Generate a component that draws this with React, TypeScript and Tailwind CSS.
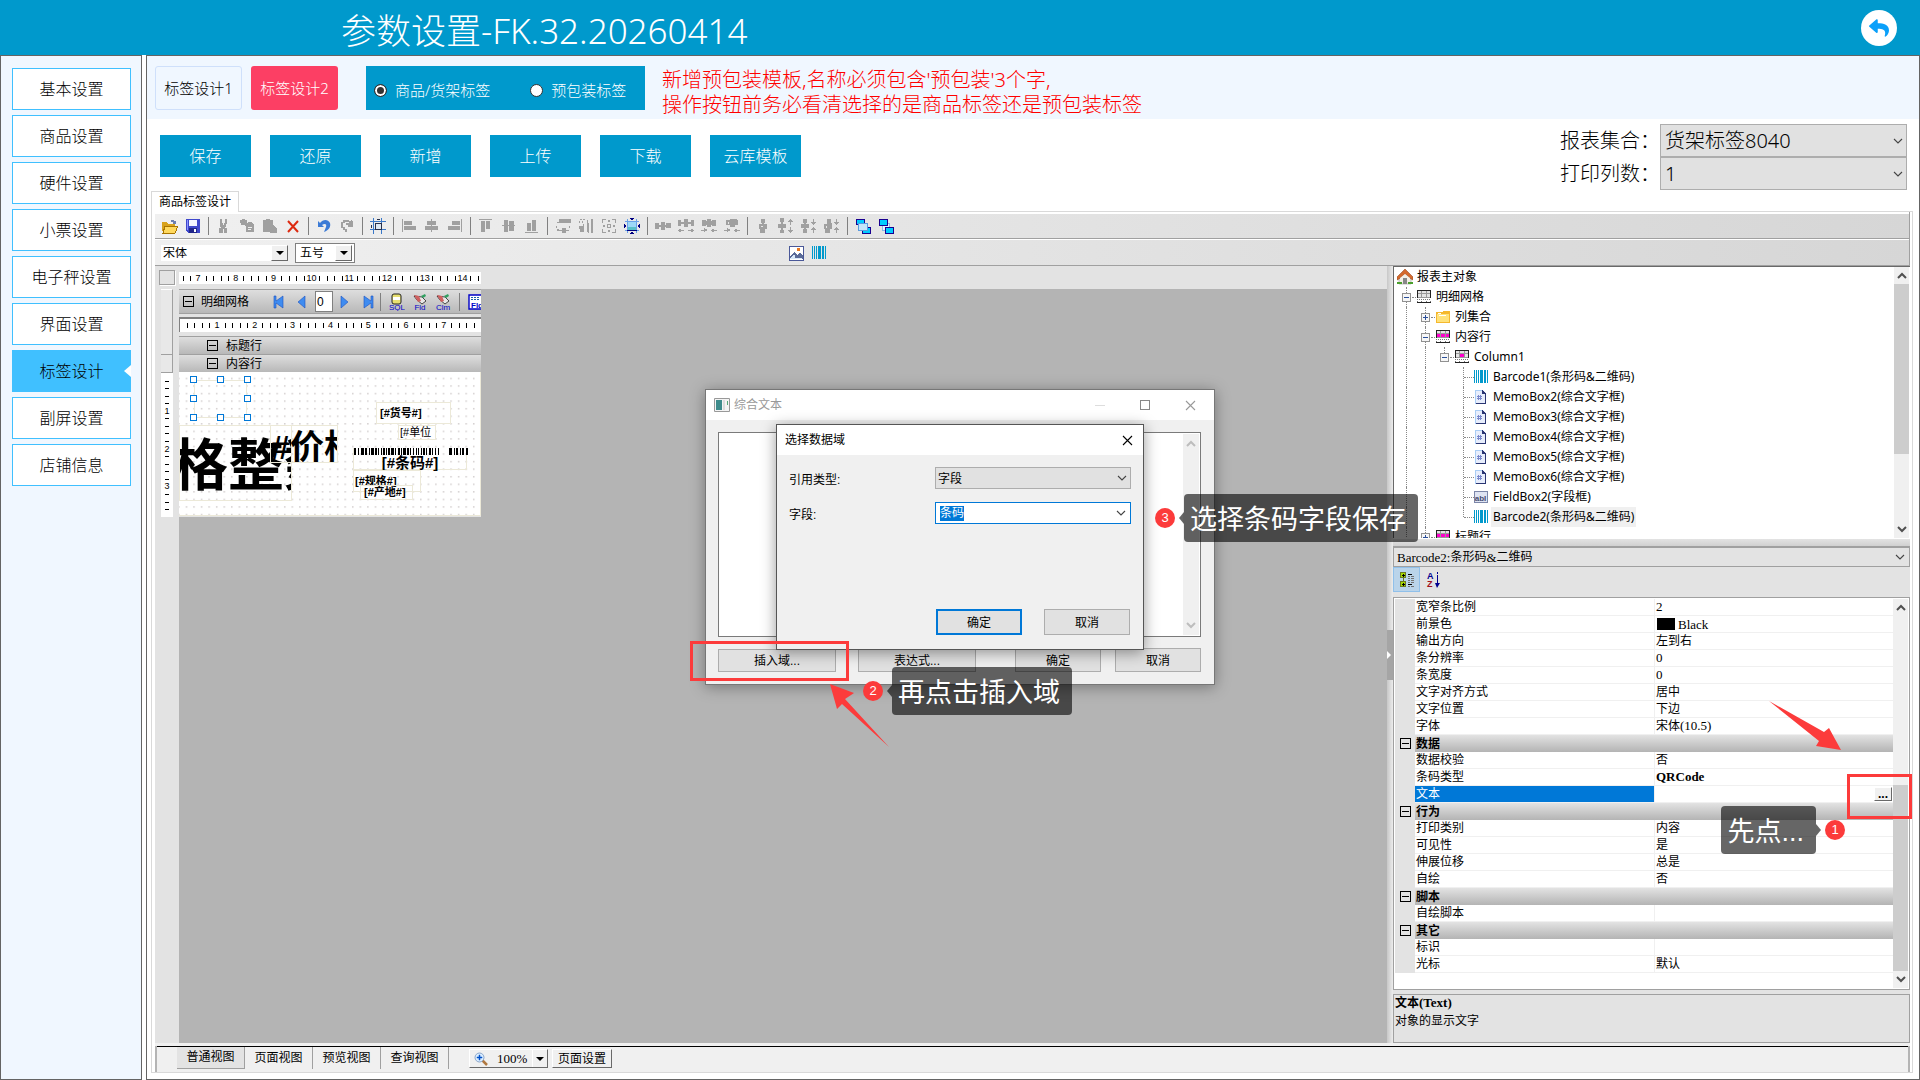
import { Fragment, useState } from 'react';
import type { ReactNode } from 'react';
import { FaReply } from 'react-icons/fa';

const MENU = ['基本设置', '商品设置', '硬件设置', '小票设置', '电子秤设置', '界面设置', '标签设计', '副屏设置', '店铺信息'];
const ACTIONS = ['保存', '还原', '新增', '上传', '下载', '云库模板'];

const GRAY = '#a0a0a0';

function Ico({ children, className = 'h-4 w-4' }: { children: ReactNode; className?: string }) {
  return (
    <svg viewBox="0 0 16 16" className={className} shapeRendering="crispEdges" aria-hidden="true">
      {children}
    </svg>
  );
}

const gray = (d: string) => (
  <Ico>
    <path d={d} fill={GRAY} />
  </Ico>
);

function BarcodeIcon() {
  return (
    <Ico className="h-4 w-4 shrink-0">
      <path d="M1 1h1v13H1zM3 1h1v13H3zM5 1h1v13H5zM7 1h3v13H7zM11 1h1v13h-1zM12 1h1v13h-1zM14 1h1v13h-1z" fill="#0099cc" />
    </Ico>
  );
}

type Tool = { label: string; icon: ReactNode } | null;

const TOOLS: Tool[] = [
  {
    label: '打开',
    icon: (
      <Ico>
        <path d="M0 4h5l1 2h7v8H1L0 13z" fill="#d8a21c" />
        <path d="M3 8h13l-3 7H1z" fill="#ffd95e" stroke="#a87400" strokeWidth="1" />
        <path d="M9 2h3v1h2v3h-3V4H9z" fill="#6d7fb0" />
      </Ico>
    ),
  },
  {
    label: '保存',
    icon: (
      <Ico>
        <path d="M1 1h14v14H3l-2-2z" fill="#3f48cc" />
        <path d="M4 2h8v6H4z" fill="#f4f6ff" />
        <path d="M4 10h8v5H4z" fill="#20258a" />
        <path d="M9 11h2v3H9z" fill="#fff" />
        <path d="M2 2h1v10H2z" fill="#8d94ff" />
      </Ico>
    ),
  },
  null,
  { label: '剪切', icon: gray('M4 1h2v4h1v2h1V5h1V1h2v5h-1v3h-1v1h2v5h-3v-4H7v4H3v-5h2V9H4z') },
  { label: '复制', icon: gray('M1 2h2V1h3v1h2v3h1V4h4l2 3v7H7V8H6V7H2V5H1zM9 9v1h4V9zM9 11v1h3v-1z') },
  { label: '粘贴', icon: gray('M1 2h3V1h4v1h3v5h1l3 4v4H8v-1H1z') },
  {
    label: '删除',
    icon: (
      <Ico>
        <path d="M3 3l10 11M13 3L3 14" stroke="#dd2a10" strokeWidth="2" fill="none" shapeRendering="auto" />
      </Ico>
    ),
  },
  null,
  {
    label: '撤销',
    icon: (
      <Ico>
        <path d="M2 3v6h6L6 7c3-2 5-1 4 2l-2 5c5-2 7-5 6-9-2-4-7-4-10 0z" fill="#3c7bd6" shapeRendering="auto" />
      </Ico>
    ),
  },
  { label: '重做', icon: gray('M14 3v6H9V7H7V5h3V4H6v1H4v4h2v2h2v3H6v-2H4v-2H2V4h2V2h6v1h2V2h1v1z') },
  null,
  {
    label: '网格',
    icon: (
      <Ico>
        <path d="M3 0h1v16H3zM11 0h1v16h-1zM0 3h16v1H0zM0 11h16v1H0z" fill="#3a78c8" />
        <path d="M5 5h6v6H5z" fill="#dce8f4" stroke="#26304c" />
        <path d="M7 1h3v1H7zM1 7h1v3H1z" fill="#26304c" />
      </Ico>
    ),
  },
  null,
  { label: '左对齐', icon: gray('M1 1h1v13H1zM3 3h8v4H3zM3 8h12v4H3z') },
  { label: '水平居中', icon: gray('M7 1h1v2h4v4H8v1h6v4H8v2H7v-2H1V8h6V7H3V3h4z') },
  { label: '右对齐', icon: gray('M14 1h1v13h-1zM5 3h8v4H5zM1 8h12v4H1z') },
  null,
  { label: '顶对齐', icon: gray('M1 1h13v1H1zM3 3h4v11H3zM8 3h4v8H8z') },
  { label: '垂直居中', icon: gray('M3 2h4v5h1V3h5v4h1v1h-1v5H8V8H7v6H3V8H1V7h2z') },
  { label: '底对齐', icon: gray('M1 14h13v1H1zM3 5h4v8H3zM8 2h4v11H8z') },
  null,
  { label: '等宽', icon: gray('M4 1h12v4H2V4h2zM1 8h1v2H1zM14 8h1v2h-1zM2 11h2v1h3v-2h4v2h3v1h-3v2H7v-2H2z') },
  { label: '等高', icon: gray('M2 1h2v1H2zM5 1h2v1H5zM1 3h1v2H1zM4 3h1v2H4zM1 8h4V6h1v8H2v-3H1zM9 1l2 5v9h-1L9 12zM13 1h2v14h-2z') },
  { label: '等大小', icon: gray('M1 1h4v1H2v3H1zM11 1h4v4h-1V2h-3zM1 11h1v3h3v1H1zM14 11h1v4h-4v-1h3zM6 6h4v4H6zM7 7v2h2V7zM7 2h2v2H7zM7 12h2v2H7zM2 7h2v2H2zM12 7h2v2h-2z') },
  {
    label: '适应网格',
    icon: (
      <Ico>
        <path d="M3 1h1v14H3zM12 1h1v14h-1zM1 3h14v1H1zM1 12h14v1H1z" fill="#6aa2e8" />
        <path d="M4 4h8v8H4z" fill="#9cd8f8" />
        <path d="M4 9h8v3H4z" fill="#58c0c8" />
        <path d="M3 12h10v1H3zM6 0h4v1H6zM7 1h2v1H7zM6 15h4v1H6zM7 14h2v1H7zM0 6h1v4H0zM1 7h1v2H1zM15 6h1v4h-1zM14 7h1v2h-1z" fill="#000080" />
      </Ico>
    ),
  },
  null,
  { label: '横向等距', icon: gray('M0 5h4v2h2V4h4v3h1V5h5v5h-5V9h-1v3H6V9H4v2H0z') },
  { label: '增加横向间距', icon: gray('M0 2h3v2h3V1h4v3h3V2h3v6h-3V6h-3v3H6V6H3v2H0zM0 12h1v-1h2v1h3v1H3v1H1v-1H0zM10 12h3v-1h2v1h1v1h-1v1h-2v-1h-3z') },
  { label: '减小横向间距', icon: gray('M1 2h4v1h1V1h4v2h1V2h4v6h-4V7h-1v2H6V7H5v1H1zM0 12h3v-2h1v1h2v2H4v1H3v-1H0zM10 12h1v-1h2v1h3v1h-3v1h-2v-1h-1z') },
  { label: '移除横向间距', icon: gray('M2 2h4V1h7v1h1v5h-3v2H6V7H2zM4 4v2h1V4zM0 12h3v-2h1v1h2v2H4v1H3v-1H0zM10 12h1v-1h2v1h3v1h-3v1h-2v-1h-1z') },
  null,
  { label: '纵向等距', icon: gray('M6 1h4v4H9v1h3v5h-2v4H5v-4H4V6h3V5H6zM6 8v1h2V8z') },
  { label: '增加纵向间距', icon: gray('M2 0h4v4H5v2h3v4H5v2h1v3H2v-3h1v-2H0V6h3V4H2zM12 1h1v1h1v1h1v1h-2v3h-1V4h-2V3h1V2h1zM12 9h1v3h2v1h-1v1h-1v1h-1v-1h-1v-1h-1v-1h2z') },
  { label: '减小纵向间距', icon: gray('M2 1h4v4H5v1h3v4H5v1h1v4H2v-4h1v-1H0V6h3V5H2zM12 1h1v3h2v1h-1v1h-1v1h-1V6h-1V5h-1V4h2zM12 9h1v1h1v1h1v1h-2v3h-1v-3h-2v-1h1v-1h1z') },
  { label: '移除纵向间距', icon: gray('M3 1h4v4h1v6H6v4H1v-4H0V6h3zM2 8v2h1V8zM12 1h1v3h2v1h-1v1h-1v1h-1V6h-1V5h-1V4h2zM12 9h1v1h1v1h1v1h-2v3h-1v-3h-2v-1h1v-1h1z') },
  null,
  {
    label: '置前',
    icon: (
      <Ico>
        <path d="M1 1h8v5H1zM7 9h8v6H7z" fill="#00ccff" stroke="#1a0090" />
        <path d="M3 5h9v7H3z" fill="#c4e6fb" stroke="#5a9be0" />
      </Ico>
    ),
  },
  {
    label: '置后',
    icon: (
      <Ico>
        <path d="M4 5h7v7H4z" fill="#e8f4ff" stroke="#88b8e8" />
        <path d="M1 1h8v6H1zM7 9h8v6H7z" fill="#00ccff" stroke="#1a0090" />
      </Ico>
    ),
  },
];

function Chevron({ className = '' }: { className?: string }) {
  return (
    <svg viewBox="0 0 10 6" className={'pointer-events-none h-[6px] w-[10px] ' + className} aria-hidden="true">
      <path d="M1 1l4 4 4-4" fill="none" stroke="currentColor" strokeWidth="1.1" />
    </svg>
  );
}

function ScrollArrow({ up = false, light = false }: { up?: boolean; light?: boolean }) {
  return (
    <svg viewBox="0 0 10 7" className={'mx-auto h-[7px] w-[10px] shrink-0 ' + (light ? 'text-[#bdbdbd]' : 'text-[#505050]')} aria-hidden="true">
      <path d={up ? 'M1 6l4-4 4 4' : 'M1 1l4 4 4-4'} fill="none" stroke="currentColor" strokeWidth="2" />
    </svg>
  );
}

function ClassicDrop() {
  return (
    <span className="pointer-events-none flex h-4 w-[17px] shrink-0 items-center justify-center border border-[#fff] border-r-[#696969] border-b-[#696969] bg-[#f0f0f0]">
      <span className="border-x-[4px] border-t-[4px] border-x-transparent border-t-black" />
    </span>
  );
}

function Minus() {
  return (
    <span className="flex h-[11px] w-[11px] shrink-0 items-center justify-center border border-black">
      <span className="h-px w-[7px] bg-black" />
    </span>
  );
}

/* ---------- rulers ---------- */

const CM = 37.8;

function Ruler({ first, offset, labels, width }: { first: number; offset: number; labels: number; width: number }) {
  const ticks: number[] = [];
  for (let i = -5; i < labels * 5 + 5; i++) {
    const x = Math.round(offset + (i * CM) / 5);
    if (i % 5 !== 0 && x > 3 && x < width - 2) ticks.push(x);
  }
  return (
    <svg viewBox={`0 0 ${width} 12`} className="h-3 w-full bg-white" preserveAspectRatio="xMinYMid slice">
      {ticks.map((x) => (
        <rect key={x} x={x} y={4} width={1} height={5} fill="#000" />
      ))}
      {Array.from({ length: labels }, (_, i) => (
        <text key={i} x={offset + i * CM} y={9} textAnchor="middle" fontSize="9" fontFamily="Liberation Sans">
          {first + i}
        </text>
      ))}
    </svg>
  );
}

function VRuler() {
  return (
    <svg viewBox="0 0 12 144" className="block h-36 w-3 bg-white">
      {Array.from({ length: 18 }, (_, i) => i + 1)
        .filter((i) => i % 5 !== 0)
        .map((i) => (
          <rect key={i} x={4} y={Math.round(i * 7.56)} width={4} height={1} fill="#000" />
        ))}
      {[1, 2, 3].map((n) => (
        <text key={n} x={6} y={n * CM + 3} textAnchor="middle" fontSize="9" fontFamily="Liberation Sans">
          {n}
        </text>
      ))}
    </svg>
  );
}

/* ---------- label canvas ---------- */

// alternating bar / gap widths
const BARS = [2, 2, 1, 2, 3, 1, 2, 2, 1, 1, 3, 1, 2, 1, 1, 2, 1, 1, 2, 1, 1, 1, 2, 1, 3, 1, 1, 2, 2, 1, 1, 1, 3, 1, 2, 1, 1, 2, 1, 2, 1, 1, 1, 2, 1, 1, 2, 1, 1, 2, 2, 1, 1, 2, 1, 2, 1];

function CanvasBarcode() {
  let x = 0;
  return (
    <svg viewBox="0 0 114 7" className="block h-[7px] w-[114px]" shapeRendering="crispEdges">
      {BARS.map((w, i) => {
        const at = x;
        x += w;
        return i % 2 === 0 ? <rect key={i} x={at} y={0} width={w} height={7} fill="#000" /> : null;
      })}
      <path d="M95 0h3v7h-3zM100 0h1v7h-1zM102 0h2v7h-2zM106 0h1v7h-1zM108 0h2v7h-2zM112 0h2v7h-2z" fill="#000" />
    </svg>
  );
}

const HANDLES = [
  'left-[11px] top-[4px]',
  'left-[38px] top-[4px]',
  'left-[65px] top-[4px]',
  'left-[11px] top-[23px]',
  'left-[65px] top-[23px]',
  'left-[11px] top-[42px]',
  'left-[38px] top-[42px]',
  'left-[65px] top-[42px]',
];

function LabelCanvas() {
  return (
    <div className="relative h-36 w-[302px] overflow-hidden border-r border-b border-[#ece9d8] bg-white leading-none text-black">
      <svg className="absolute inset-0 h-full w-full" aria-hidden="true">
        <defs>
          <pattern id="dots" width="7.56" height="7.56" patternUnits="userSpaceOnUse" x="1" y="0">
            <rect x="6" y="6" width="1" height="1" fill="#9a8f8f" />
          </pattern>
        </defs>
        <rect width="100%" height="100%" fill="url(#dots)" />
      </svg>
      <div className="absolute top-2 left-[15px] h-[38px] w-[53px] border border-[#ece9d8]" />
      {HANDLES.map((pos) => (
        <span key={pos} className={'absolute h-[7px] w-[7px] border border-[#0078d7] bg-white ' + pos} />
      ))}
      <div className="absolute top-[53px] left-0 h-[76px] w-[113px] overflow-hidden border border-[#ece9d8] pt-[12px] text-[56px] font-bold whitespace-nowrap">
        <span className="-ml-2">格整数</span>
      </div>
      <div className="absolute top-[53px] left-[91px] h-[38px] w-[68px] overflow-hidden border border-[#ece9d8] pt-1 text-[34px] font-bold whitespace-nowrap">
        #价格
      </div>
      <div className="absolute top-[30px] left-[197px] h-[22px] w-[75px] border border-[#ece9d8] px-[3px] pt-[5px] text-[11px] font-bold">[#货号#]</div>
      <div className="absolute top-[53px] left-[219px] h-[15px] w-[38px] overflow-hidden border border-[#ece9d8] px-px pt-px text-[11px] whitespace-nowrap">
        [#单位
      </div>
      <div className="absolute top-[76px] left-[174px] h-[22px] w-[114px] border-x border-b border-[#ece9d8] text-center text-[15px] font-bold">
        <CanvasBarcode />
        [#条码#]
      </div>
      <div className="absolute top-[98px] left-[174px] h-[22px] w-[68px] border border-[#ece9d8] px-px pt-[5px] text-[11px] font-bold">[#规格#]</div>
      <div className="absolute top-[113px] left-[181px] h-[15px] w-[53px] border border-[#ece9d8] px-[3px] pt-px text-[11px] font-bold">[#产地#]</div>
    </div>
  );
}

function NavIcon({ d }: { d: string }) {
  return (
    <svg viewBox="0 0 12 14" className="h-[14px] w-3">
      <path d={d} fill="#3f8cf0" stroke="#1c50c0" strokeWidth="0.6" />
    </svg>
  );
}

function DbIcon({ word }: { word: string }) {
  return (
    <svg viewBox="0 0 16 18" className="h-[18px] w-4">
      {word === 'SQL' ? (
        <>
          <rect x="3" y="1" width="9" height="10" rx="2" fill="#e8e070" stroke="#222" />
          <rect x="4" y="4" width="7" height="3" fill="#fff" />
        </>
      ) : (
        <>
          <path d="M2 3l8 1 4 4-4 3-5-4z" fill="#e8e8e8" stroke="#222" strokeWidth="0.8" />
          <path d="M2 2l5 1 2 5-3 1z" fill="#d06060" />
          <path d="M9 3l4-2 1 2-3 2z" fill="#30a060" />
        </>
      )}
      <text x="8" y="17" textAnchor="middle" fontSize="8" fill="#0000c8" fontFamily="Liberation Sans">
        {word}
      </text>
    </svg>
  );
}

function Designer() {
  return (
    <div className="flex w-[326px] shrink-0 flex-col">
      <div className="flex h-[23px] items-center">
        <div className="mx-1 h-[15px] w-4 border border-[#a0a0a0] bg-[#e3e3e3] shadow-[1px_1px_0_#fff]" />
        <div className="flex-1">
          <Ruler first={7} offset={19} labels={8} width={302} />
        </div>
      </div>
      <div className="flex">
        <div className="w-6 px-[6px]">
          <div className="h-[66px] border-t border-r border-b border-[#a0a0a0] border-t-white bg-[#e8e8e8]" />
          <div className="h-[18px] border-r border-b border-[#a0a0a0] bg-[#e8e8e8]" />
          <VRuler />
        </div>
        <div className="w-[302px] bg-[#e3e3e3]">
          <div className="flex h-[25px] items-center overflow-hidden border-t border-b border-[#a0a0a0] bg-gradient-to-b from-[#dedede] to-[#b8b8b8] pl-1">
            <Minus />
            <span className="ml-[7px] w-[72px] shrink-0">明细网格</span>
            <button type="button" aria-label="首页" className="w-6 shrink-0">
              <NavIcon d="M1 1h2v5l7-5v12l-7-5v5H1z" />
            </button>
            <button type="button" aria-label="上一页" className="w-[18px] shrink-0">
              <NavIcon d="M8 1v12L1 7z" />
            </button>
            <input aria-label="页码" defaultValue="0" className="h-[21px] w-[18px] shrink-0 border border-[#808080] bg-white pl-px text-xs leading-none outline-none" />
            <button type="button" aria-label="下一页" className="ml-[7px] w-[23px] shrink-0">
              <NavIcon d="M1 1l7 6-7 6z" />
            </button>
            <button type="button" aria-label="末页" className="w-[17px] shrink-0">
              <NavIcon d="M1 1l7 5V1h2v12H8V8l-7 5z" />
            </button>
            <span className="h-[18px] w-px shrink-0 bg-[#808080]" />
            <span className="ml-2 flex shrink-0 gap-[7px]">
              <DbIcon word="SQL" />
              <DbIcon word="Fld" />
              <DbIcon word="Clm" />
            </span>
            <span className="ml-2 h-[18px] w-px shrink-0 bg-[#808080]" />
            <svg viewBox="0 0 14 16" className="ml-2 h-4 w-[14px] shrink-0">
              <path d="M1 1h14v14H1z" fill="#fff" stroke="#0000c8" strokeWidth="1.4" />
              <path d="M3 3h2v1H3zM6 3h2v1H6zM9 3h2v1H9zM3 5h2v1H3zM6 5h2v1H6zM9 5h2v1H9z" fill="#1c60a8" />
              <text x="3" y="14" fontSize="8" fontWeight="bold" fill="#0000c8" fontFamily="Liberation Sans">
                Fld
              </text>
            </svg>
          </div>
          <div className="my-[3px] border-t-2 border-l border-[#808080] bg-white pb-px">
            <Ruler first={1} offset={37} labels={7} width={301} />
          </div>
          <div className="mt-1 flex h-[18px] items-center gap-2 border-t border-[#a0a0a0] bg-gradient-to-b from-[#dedede] to-[#b8b8b8] pl-7">
            <Minus />
            标题行
          </div>
          <div className="flex h-[18px] items-center gap-2 border-t border-[#a0a0a0] bg-gradient-to-b from-[#dedede] to-[#b8b8b8] pl-7">
            <Minus />
            内容行
          </div>
          <LabelCanvas />
        </div>
      </div>
    </div>
  );
}

/* ---------- callouts ---------- */

function Badge({ n }: { n: number }) {
  return <span className="flex h-5 w-5 shrink-0 items-center justify-center rounded-full bg-[#fc3b3b] text-[13px] text-white">{n}</span>;
}

function Bubble({ children, side = 'left' }: { children: ReactNode; side?: 'left' | 'right' }) {
  return (
    <span className="relative flex h-12 items-center rounded bg-black/60 pt-1 pr-3 pl-[6px] text-[27px] whitespace-nowrap text-white">
      {children}
      <span
        className={
          'absolute top-1/2 -translate-y-1/2 border-y-[6px] border-y-transparent ' +
          (side === 'left' ? 'right-full border-r-[5px] border-r-black/60' : 'left-full border-l-[5px] border-l-black/60')
        }
      />
    </span>
  );
}

/* ---------- dialogs ---------- */

const DLG_BTN = 'border border-[#adadad] bg-[#e1e1e1] pt-px text-[12px] leading-none';

function Cross() {
  return (
    <svg viewBox="0 0 11 11" className="h-[11px] w-[11px]">
      <path d="M1 1l9 9M10 1l-9 9" stroke="currentColor" strokeWidth="1.1" />
    </svg>
  );
}

function FieldDialog() {
  return (
    <section className="absolute top-[34px] left-[70px] flex h-[226px] w-[368px] flex-col border border-[#555] bg-[#f0f0f0] shadow-[0_3px_14px_rgba(0,0,0,0.4)]">
      <header className="flex h-[30px] items-center justify-between bg-white pr-[10px] pl-2">
        <h2>选择数据域</h2>
        <button type="button" aria-label="关闭">
          <Cross />
        </button>
      </header>
      <div className="flex flex-1 flex-col px-3 pt-3">
        <div className="flex h-[22px] items-center justify-between">
          <label htmlFor="refType" className="pt-1">
            引用类型:
          </label>
          <span className="relative">
            <select id="refType" className="block h-[22px] w-[196px] appearance-none border border-[#adadad] bg-[#e1e1e1] px-[2px] pt-px text-[12px] outline-none">
              <option>字段</option>
            </select>
            <Chevron className="absolute top-2 right-1 text-[#444]" />
          </span>
        </div>
        <div className="mt-[13px] flex h-[22px] items-center justify-between">
          <span className="pt-1" id="fieldLabel">
            字段:
          </span>
          <button
            type="button"
            aria-labelledby="fieldLabel"
            className="flex h-[22px] w-[196px] items-center justify-between border border-[#0078d7] bg-white pr-1 pl-1 text-left"
          >
            <span className="bg-[#0078d7] leading-[15px] text-white">条码</span>
            <Chevron className="text-[#444]" />
          </button>
        </div>
        <div className="mt-auto mr-px mb-[14px] flex justify-end gap-[22px]">
          <button type="button" className="h-[26px] w-[86px] border-2 border-[#0078d7] bg-[#e1e1e1] pt-px">
            确定
          </button>
          <button type="button" className={DLG_BTN + ' h-[26px] w-[86px]'}>
            取消
          </button>
        </div>
      </div>
    </section>
  );
}

function MemoDialog() {
  return (
    <section className="absolute top-[123px] left-[550px] z-20 h-[296px] w-[510px] border border-[#777] bg-[#f0f0f0] shadow-[0_2px_14px_rgba(0,0,0,0.35)]">
      <header className="flex h-[30px] items-center bg-white pl-2 text-[#999]">
        <svg viewBox="0 0 16 14" className="mr-1 h-[14px] w-4">
          <path d="M0.500 0.500h15v13H0.500z" fill="#f4f4f4" stroke="#999" />
          <path d="M2 2h6v10H2z" fill="#3d8b8b" />
          <path d="M9 2h2v10H9z" fill="#ddd" />
          <path d="M13 3h1v4h-1z" fill="#58a878" />
        </svg>
        <h2>综合文本</h2>
        <div className="ml-auto flex items-center gap-[35px] pr-[18px]">
          <span className="h-px w-[10px] bg-[#ddd]" />
          <span className="h-[10px] w-[10px] border border-[#888]" />
          <button type="button" aria-label="关闭窗口">
            <Cross />
          </button>
        </div>
      </header>
      <div className="pt-3 pr-[13px] pl-3">
        <div className="flex h-[205px] border border-[#7a7a7a] bg-white p-px">
          <textarea aria-label="综合文本" className="flex-1 resize-none outline-none" />
          <div className="flex w-4 flex-col justify-between bg-[#f0f0f0] py-[6px]">
            <ScrollArrow up light />
            <ScrollArrow light />
          </div>
        </div>
        <div className="mt-[11px] flex items-center">
          <button type="button" className={DLG_BTN + ' h-[23px] w-[118px]'}>
            插入域...
          </button>
          <button type="button" className={DLG_BTN + ' ml-[22px] h-[23px] w-[118px]'}>
            表达式...
          </button>
          <button type="button" className={DLG_BTN + ' ml-auto h-6 w-[86px]'}>
            确定
          </button>
          <button type="button" className={DLG_BTN + ' ml-[14px] h-6 w-[86px]'}>
            取消
          </button>
        </div>
      </div>
      <FieldDialog />
      <div className="absolute top-[251px] -left-4 h-10 w-[159px] border-[3px] border-[#fc3b3b]" />
      <svg viewBox="0 0 60 64" className="absolute top-[294px] left-[124px] h-16 w-[60px]" aria-hidden="true">
        <path d="M0 0L24 9L15 15L59 63L12 20L7 25Z" fill="#fc3b3b" />
      </svg>
      <div className="absolute top-[277px] left-[157px] flex items-center gap-[9px]">
        <Badge n={2} />
        <Bubble>再点击插入域</Bubble>
      </div>
      <div className="absolute top-[104px] left-[449px] flex items-center gap-[9px]">
        <Badge n={3} />
        <Bubble>选择条码字段保存</Bubble>
      </div>
    </section>
  );
}

/* ---------- object tree ---------- */

function GridIcon({ fill = '' }: { fill?: string }) {
  return (
    <Ico className="h-4 w-4 shrink-0">
      <path d="M1 1h14v8H1z" fill="#e4e4e4" />
      <path d="M1 4h14v1H1zM1 8h14v1H1zM5 2h1v6H5zM10 2h1v6h-1z" fill="#999" />
      {fill === 'row' && <path d="M1 5h4v3H1zM6 5h4v3H6zM11 5h4v3h-4z" fill="#ff00cc" />}
      {fill === 'cell' && <path d="M6 5h4v3H6z" fill="#ff00cc" />}
      <path d="M1 1h14v1H1zM1 1h1v8H1zM14 1h1v8h-1zM1 13h14v1H1z" fill="#222" />
      <path d="M1 10h1v1H1zM3 10h1v1H3zM5 10h1v1H5zM7 10h1v1H7zM9 10h1v1H9zM11 10h1v1h-1zM13 10h1v1h-1zM1 12h1v1H1zM5 12h1v1H5zM10 12h1v1h-1zM14 12h1v1h-1z" fill="#777" />
    </Ico>
  );
}

const folderIcon = (
  <Ico className="h-4 w-4 shrink-0">
    <path d="M1 3h6l1-1h7v12H1z" fill="#f5b82e" />
    <path d="M2 5h12v8H2z" fill="#ffe27a" />
    <path d="M4 6h7v1H4zM3 4h3v1H3z" fill="#fff" />
  </Ico>
);

const memoIcon = (
  <Ico className="h-4 w-4 shrink-0">
    <path d="M2 1h8l3 3v11H2z" fill="#e8eefc" />
    <path d="M2 1h1v14H2zM2 1h7v1H2z" fill="#a9cdf5" />
    <path d="M12 4h1v11H3v-1h9zM9 1h1v4H9zM10 2h1v1h1v1h1v1h-3z" fill="#2a3572" />
    <path d="M5 6h1v5H5zM7 6h1v5H7zM4 7h5v1H4zM4 9h5v1H4z" fill="#7a88cc" />
  </Ico>
);

const fieldIcon = (
  <svg viewBox="0 0 16 16" className="h-4 w-4 shrink-0">
    <rect x="1.500" y="2.500" width="13" height="11" fill="#dfe4f2" stroke="#7c86a8" />
    <text x="7.500" y="11.500" textAnchor="middle" fontSize="8" fontWeight="bold" fill="#444c70" fontFamily="Liberation Sans">
      abI
    </text>
  </svg>
);

const houseIcon = (
  <svg viewBox="0 0 16 16" className="h-4 w-4 shrink-0">
    <path d="M2 7h12v8H2z" fill="#f3efe6" stroke="#999" strokeWidth="0.6" />
    <path d="M8 0L0 8v3l2-1 6-5 6 5 2 1V8z" fill="#d4692c" stroke="#8a3c14" strokeWidth="0.5" />
    <path d="M8 5l5 4v1H3V9z" fill="#f3efe6" />
    <path d="M6 9h4v6H6z" fill="#888" />
    <path d="M0 13h5v2H0zM11 13h5v2h-5z" fill="#4aa02c" />
  </svg>
);

type TreeRow = { depth: number; text: string; icon: ReactNode; open?: boolean; leaf?: boolean; active?: boolean };

const TREE: TreeRow[] = [
  { depth: 0, text: '明细网格', icon: <GridIcon />, open: true },
  { depth: 1, text: '列集合', icon: folderIcon, open: false },
  { depth: 1, text: '内容行', icon: <GridIcon fill="row" />, open: true },
  { depth: 2, text: 'Column1', icon: <GridIcon fill="cell" />, open: true },
  { depth: 3, text: 'Barcode1(条形码&二维码)', icon: <BarcodeIcon />, leaf: true },
  { depth: 3, text: 'MemoBox2(综合文字框)', icon: memoIcon, leaf: true },
  { depth: 3, text: 'MemoBox3(综合文字框)', icon: memoIcon, leaf: true },
  { depth: 3, text: 'MemoBox4(综合文字框)', icon: memoIcon, leaf: true },
  { depth: 3, text: 'MemoBox5(综合文字框)', icon: memoIcon, leaf: true },
  { depth: 3, text: 'MemoBox6(综合文字框)', icon: memoIcon, leaf: true },
  { depth: 3, text: 'FieldBox2(字段框)', icon: fieldIcon, leaf: true },
  { depth: 3, text: 'Barcode2(条形码&二维码)', icon: <BarcodeIcon />, leaf: true, active: true },
  { depth: 1, text: '标题行', icon: <GridIcon fill="row" />, open: false },
];

function ObjectTree() {
  return (
    <div className="flex h-[272px] shrink-0 overflow-hidden border-t border-l border-[#696969] bg-white">
      <ul className="flex-1 pl-[3px] font-['Noto_Sans','Noto_Sans_CJK_SC',sans-serif]">
        <li className="flex h-5 items-center gap-1">
          {houseIcon}
          报表主对象
        </li>
        {TREE.map((row) => (
          <li key={row.text} className="flex h-5 items-center">
            {Array.from({ length: row.depth }, (_, i) => (
              <span key={i} className="flex h-5 w-[19px] shrink-0 justify-center">
                {i < 2 && <span className="border-l border-dotted border-[#888]" />}
              </span>
            ))}
            {row.leaf ? (
              <span className="relative h-5 w-[19px] shrink-0">
                <span className={'absolute top-0 left-[9px] border-l border-dotted border-[#888] ' + (row.active ? 'h-[10px]' : 'h-5')} />
                <span className="absolute top-[10px] left-[10px] w-[10px] border-t border-dotted border-[#888]" />
              </span>
            ) : (
              <span className="relative flex h-5 w-[19px] shrink-0 items-center justify-center">
                <span className={'absolute top-0 left-[9px] border-l border-dotted border-[#888] ' + (row.depth === 2 ? 'h-[10px]' : 'h-5')} />
                <span className="absolute top-[10px] right-0 w-1 border-t border-dotted border-[#888]" />
                <span className="relative flex h-[9px] w-[9px] items-center justify-center border border-[#919191] bg-[#f6f6f6]">
                  <span className="h-px w-[5px] bg-[#2a4f9a]" />
                  {!row.open && <span className="absolute h-[5px] w-px bg-[#2a4f9a]" />}
                </span>
              </span>
            )}
            {row.icon}
            <span className={'ml-[2px] px-[2px] leading-5 ' + (row.active ? 'bg-[#f0f0f0]' : '')}>{row.text}</span>
          </li>
        ))}
      </ul>
      <div className="mr-px flex w-[15px] flex-col bg-[#f0f0f0] py-[5px]">
        <ScrollArrow up />
        <div className="mt-[5px] h-[170px] bg-[#cdcdcd]" />
        <div className="mt-auto">
          <ScrollArrow />
        </div>
      </div>
    </div>
  );
}

/* ---------- property grid ---------- */

type Prop = { name: string; value?: ReactNode; group?: boolean; active?: boolean };

// Latin runs of the grid use a serif face next to the CJK text
function Latin({ children }: { children: ReactNode }) {
  return <span className="font-['Liberation_Serif',serif] text-[13px] leading-none">{children}</span>;
}

const PROPS: Prop[] = [
  { name: '宽窄条比例', value: <Latin>2</Latin> },
  {
    name: '前景色',
    value: (
      <span className="flex h-4 items-center gap-[3px] pl-px">
        <span className="h-3 w-[18px] bg-black" />
        <Latin>Black</Latin>
      </span>
    ),
  },
  { name: '输出方向', value: '左到右' },
  { name: '条分辨率', value: <Latin>0</Latin> },
  { name: '条宽度', value: <Latin>0</Latin> },
  { name: '文字对齐方式', value: '居中' },
  { name: '文字位置', value: '下边' },
  {
    name: '字体',
    value: (
      <>
        宋体<Latin>(10.5)</Latin>
      </>
    ),
  },
  { name: '数据', group: true },
  { name: '数据校验', value: '否' },
  {
    name: '条码类型',
    value: (
      <b>
        <Latin>QRCode</Latin>
      </b>
    ),
  },
  { name: '文本', active: true },
  { name: '行为', group: true },
  { name: '打印类别', value: '内容' },
  { name: '可见性', value: '是' },
  { name: '伸展位移', value: '总是' },
  { name: '自绘', value: '否' },
  { name: '脚本', group: true },
  { name: '自绘脚本' },
  { name: '其它', group: true },
  { name: '标识' },
  { name: '光标', value: '默认' },
];

function PropertyGrid() {
  return (
    <div className="relative flex min-h-0 flex-1 border border-[#a0a0a0] bg-white p-px">
      <div className="flex-1">
        <table className="w-full table-fixed border-separate border-spacing-0">
          <colgroup>
            <col className="w-5" />
            <col />
            <col />
          </colgroup>
          <tbody>
            {PROPS.map((p) =>
              p.group ? (
                <tr key={p.name} className="h-[17px]">
                  <td className="bg-[#e3e3e3] p-0">
                    <span className="flex h-4 items-center justify-center">
                      <Minus />
                    </span>
                  </td>
                  <td colSpan={2} className="bg-gradient-to-b from-[#e3e3e3] to-[#b4b4b4] p-0 px-px leading-4 font-bold">
                    {p.name}
                  </td>
                </tr>
              ) : (
                <tr key={p.name} className="h-[17px]">
                  <td className="bg-[#e3e3e3] p-0" />
                  <td className={'border-b border-[#f0f0f0] p-0 px-px leading-4 ' + (p.active ? 'bg-[#0078d7] text-white' : '')}>{p.name}</td>
                  <td className="border-b border-l border-[#f0f0f0] p-0 px-px leading-4">
                    {p.active ? (
                      <span className="flex h-4 items-center justify-end">
                        <button
                          type="button"
                          aria-label="编辑文本"
                          className="h-[14px] w-[18px] border border-white border-r-[#696969] border-b-[#696969] bg-[#f0f0f0] text-[12px] leading-[8px] font-bold"
                        >
                          ...
                        </button>
                      </span>
                    ) : (
                      p.value
                    )}
                  </td>
                </tr>
              ),
            )}
          </tbody>
        </table>
      </div>
      <div className="flex w-[15px] flex-col bg-[#f0f0f0] py-[5px]">
        <ScrollArrow up />
        <div className="mt-auto mb-[5px] h-[186px] bg-[#cdcdcd]" />
        <ScrollArrow />
      </div>

      <div className="absolute top-[176px] -right-[3px] z-30 h-[45px] w-[65px] border-[3px] border-[#fc3b3b]" />
      <svg viewBox="0 0 72 50" className="absolute top-[103px] right-[68px] z-30 h-[50px] w-[72px]" aria-hidden="true">
        <path d="M0 0L55 31L60 27L72 49L47 45L50 40Z" fill="#fc3b3b" />
      </svg>
      <div className="absolute top-[208px] right-[64px] z-30 flex items-center gap-[9px]">
        <Bubble side="right">先点...</Bubble>
        <Badge n={1} />
      </div>
    </div>
  );
}

function Inspector() {
  return (
    <aside className="flex w-[517px] shrink-0 flex-col bg-[#e3e3e3]">
      <ObjectTree />
      <div className="h-[9px] shrink-0 border-y border-[#a0a0a0] border-t-white bg-gradient-to-b from-[#e3e3e3] to-[#d0d0d0]" />
      <div className="relative flex h-5 shrink-0 items-center border border-[#a0a0a0] bg-[#e3e3e3] pl-[3px]">
        <select aria-label="当前对象" className="absolute inset-0 h-full w-full cursor-pointer appearance-none opacity-0">
          <option>Barcode2:条形码&二维码</option>
        </select>
        <Latin>Barcode2:</Latin>条形码<Latin>&amp;</Latin>二维码
        <Chevron className="absolute right-1 text-[#444]" />
      </div>
      <div className="flex h-[30px] shrink-0 items-start">
        <button type="button" aria-label="按分类" className="flex h-[25px] w-[27px] items-center justify-center border border-[#90c0ea] bg-[#bad4ea]">
          <Ico>
            <path d="M1 0h6v6H1zM1 9h6v6H1zM4 6h1v3H4z" fill="#6a7a20" />
            <path d="M2 1h4v4H2zM2 10h4v4H2z" fill="#a8d800" />
            <path d="M3 3h3v1H3zM4 2h1v3H4zM3 12h3v1H3zM4 11h1v3H4zM9 2h4v1H9zM9 12h4v1H9z" fill="#000" />
            <path d="M9 4h2v1H9zM12 4h3v1h-3zM9 6h2v1H9zM12 6h3v1h-3zM9 8h2v1H9zM12 8h3v1h-3zM9 10h2v1H9zM12 10h3v1h-3zM9 14h2v1H9zM12 14h3v1h-3z" fill="#777" />
          </Ico>
        </button>
        <button type="button" aria-label="按字母" className="flex h-[25px] w-[27px] items-center justify-center">
          <svg viewBox="0 0 16 16" className="h-4 w-4">
            <text x="1" y="7" fontSize="9" fontWeight="bold" fill="#000090" fontFamily="Liberation Sans">
              A
            </text>
            <text x="1" y="15" fontSize="9" fontWeight="bold" fill="#a01020" fontFamily="Liberation Sans">
              Z
            </text>
            <path d="M11 0h1v2h-1zM11 3h1v8h2l-3 5-2-5h2z" fill="#000090" />
          </svg>
        </button>
      </div>
      <PropertyGrid />
      <div className="mt-1 h-[49px] shrink-0 border border-[#a0a0a0] bg-[#e3e3e3] px-px">
        <p className="leading-4 font-bold">
          文本<Latin>(Text)</Latin>
        </p>
        <p className="mt-[2px] leading-4">对象的显示文字</p>
      </div>
    </aside>
  );
}

const VIEWS = ['普通视图', '页面视图', '预览视图', '查询视图'];

function StatusBar() {
  return (
    <footer className="mx-[2px] flex h-[26px] shrink-0 items-start border-t border-black bg-[#f0f0f0]">
      {VIEWS.map((v, i) => (
        <button
          key={v}
          type="button"
          className={'h-[22px] w-[68px] border-r border-[#a0a0a0] pb-px ' + (i === 0 ? 'ml-5 border-b bg-[#e3e3e3]' : '')}
        >
          {v}
        </button>
      ))}
      <button
        type="button"
        className="mt-[2px] ml-5 flex h-[19px] w-[79px] items-center border border-white border-r-[#696969] border-b-[#696969] bg-[#f0f0f0] pl-1"
      >
        <svg viewBox="0 0 14 14" className="h-[14px] w-[14px]">
          <path d="M8 8l5 5" stroke="#b07840" strokeWidth="2.500" />
          <circle cx="5.500" cy="5.500" r="4.500" fill="#d8ecff" stroke="#8aa4c8" />
          <path d="M5 3h1v2h2v1H6v2H5V6H3V5h2z" fill="#0050c8" stroke="#0050c8" strokeWidth="0.5" />
        </svg>
        <span className="ml-[9px] flex-1 text-left">
          <Latin>100%</Latin>
        </span>
        <span className="flex h-full w-[15px] items-center justify-center border-l border-white">
          <span className="border-x-[4px] border-t-[4px] border-x-transparent border-t-black" />
        </span>
      </button>
      <button type="button" className="mt-[2px] ml-1 h-[19px] w-[60px] border border-white border-r-[#696969] border-b-[#696969] leading-none">
        页面设置
      </button>
    </footer>
  );
}

function Toolbars() {
  return (
    <div className="border-r border-[#a0a0a0] pt-[2px]">
      <div className="flex h-[25px] items-center border-b border-[#a0a0a0] bg-gradient-to-r from-[#f0f0f0] to-[#d6d6d6] pl-[3px]">
        {TOOLS.map((t, i) => (
          <Fragment key={i}>
            {t ? (
              <button type="button" title={t.label} className="flex h-[23px] w-[23px] shrink-0 items-center justify-center">
                {t.icon}
              </button>
            ) : (
              <span className="flex w-2 shrink-0 justify-center">
                <span className="h-[18px] w-px bg-[#808080]" />
              </span>
            )}
          </Fragment>
        ))}
      </div>
      <div className="flex h-[27px] items-center border-t border-b border-[#a0a0a0] border-t-white bg-gradient-to-r from-[#f0f0f0] to-[#d6d6d6] pl-[6px]">
        <label className="relative flex h-4 w-[127px] items-center bg-white">
          <select aria-label="字体" className="h-4 w-full appearance-none pl-[2px] text-[12px] leading-none outline-none">
            <option>宋体</option>
          </select>
          <span className="absolute right-0">
            <ClassicDrop />
          </span>
        </label>
        <label className="relative ml-[7px] flex h-5 w-[60px] items-center border border-[#808080] bg-white">
          <select aria-label="字号" className="h-4 w-full appearance-none pl-1 text-[12px] leading-none outline-none">
            <option>五号</option>
          </select>
          <span className="absolute right-[2px]">
            <ClassicDrop />
          </span>
        </label>
        <button type="button" title="图像框" className="ml-[433px]">
          <Ico>
            <path d="M1 1h14v14H1z" fill="#fff" stroke="#4a5898" />
            <path d="M2 12l4-5 3 3 3-3 3 4v3H2z" fill="#5a6a98" />
            <path d="M2 13h12v1H2zM5 10h2v3H3z" fill="#d8e8f8" />
            <path d="M9 3h3v3H9z" fill="#e87820" />
          </Ico>
        </button>
        <button type="button" title="条形码" className="ml-[7px]">
          <BarcodeIcon />
        </button>
      </div>
    </div>
  );
}

export default function App() {
  const [kind, setKind] = useState('shelf');

  return (
    <div className="flex h-screen flex-col overflow-hidden bg-white font-['Liberation_Sans','Noto_Sans_CJK_SC',sans-serif] text-[12px] text-black">
      <header className="flex h-[55px] shrink-0 items-center justify-between bg-[#0099cc] pr-[23px] pl-[341px]">
        <h1 className="pt-[6px] font-['Noto_Sans','Noto_Sans_CJK_SC',sans-serif] text-[35px] leading-none font-light text-white">参数设置-FK.32.20260414</h1>
        <button type="button" aria-label="返回" className="flex h-9 w-9 items-center justify-center rounded-full bg-white text-[#0aa0fa]">
          <FaReply className="h-5 w-5" />
        </button>
      </header>

      <div className="flex min-h-0 flex-1">
        <nav className="flex w-[142px] shrink-0 flex-col gap-[5px] border border-[#646464] bg-[#f0f7ff] pt-3 pl-[11px] font-['Noto_Sans','Noto_Sans_CJK_SC',sans-serif] text-[16px] font-light">
          {MENU.map((m) => {
            const active = m === '标签设计';
            return (
              <a
                key={m}
                href="#"
                className={'relative flex h-[42px] w-[119px] items-center justify-center border border-[#40c0ff] ' + (active ? 'bg-[#40c0ff]' : 'bg-white')}
              >
                {m}
                {active && <span className="absolute -right-px border-y-[6px] border-r-[7px] border-y-transparent border-r-white" />}
              </a>
            );
          })}
        </nav>

        <main className="ml-1 flex min-w-0 flex-1 flex-col border border-[#646464]">
          <div className="flex h-[63px] shrink-0 items-start bg-[#f0f7ff] pt-[10px] pl-2 font-['Noto_Sans','Noto_Sans_CJK_SC',sans-serif] text-[15px] font-light">
            <button type="button" className="h-11 w-[87px] rounded-[3px] border border-[#cfe0fb]">
              标签设计1
            </button>
            <button type="button" className="ml-[9px] h-11 w-[87px] rounded-[3px] bg-[#fc3f64] text-white">
              标签设计2
            </button>
            <div className="ml-7 flex h-11 w-[279px] items-center bg-[#0099cc] pt-1 pl-2 text-white">
              {[
                { id: 'shelf', label: '商品/货架标签' },
                { id: 'pack', label: '预包装标签' },
              ].map((r) => (
                <label key={r.id} className="mr-10 flex items-center gap-2 last:mr-0">
                  <input
                    type="radio"
                    name="kind"
                    checked={kind === r.id}
                    onChange={() => setKind(r.id)}
                    className="h-[13px] w-[13px] appearance-none rounded-full border border-[#333] bg-white checked:bg-[#333] checked:shadow-[inset_0_0_0_2px_#fff]"
                  />
                  {r.label}
                </label>
              ))}
            </div>
            <p className="mt-px ml-[17px] text-[20px] leading-[25px] whitespace-nowrap text-[#ff0000]">
              新增预包装模板,名称必须包含'预包装'3个字,
              <br />
              操作按钮前务必看清选择的是商品标签还是预包装标签
            </p>
          </div>

          <div className="flex shrink-0 justify-between pt-[5px] pr-3 pb-px pl-[13px] font-['Noto_Sans','Noto_Sans_CJK_SC',sans-serif] font-light">
            <div className="mt-[11px] flex gap-[19px] text-[16px]">
              {ACTIONS.map((a) => (
                <button key={a} type="button" className="h-[42px] w-[91px] bg-[#0099cc] text-white">
                  {a}
                </button>
              ))}
            </div>
            <div className="text-[20px]">
              {[
                { id: 'report', label: '报表集合：', value: '货架标签8040' },
                { id: 'cols', label: '打印列数：', value: '1' },
              ].map((s) => (
                <div key={s.id} className="flex h-[33px] items-center">
                  <label htmlFor={s.id} className="w-[100px] whitespace-nowrap">
                    {s.label}
                  </label>
                  <span className="relative">
                    <select id={s.id} className="block h-[33px] w-[247px] appearance-none border border-[#adadad] bg-[#e1e1e1] px-1 outline-none">
                      <option>{s.value}</option>
                    </select>
                    <Chevron className="absolute top-[14px] right-1 text-[#444]" />
                  </span>
                </div>
              ))}
            </div>
          </div>

          <div className="flex shrink-0 pl-1">
            <div className="z-10 -mb-px flex h-[21px] w-[88px] items-center justify-center border border-b-0 border-[#d9d9d9] bg-white">商品标签设计</div>
          </div>
          <div className="mr-[6px] mb-[6px] ml-1 flex min-h-0 flex-1 flex-col border border-[#d9d9d9] pr-[2px] pl-[3px]">
            <Toolbars />
            <div className="relative flex min-h-0 flex-1 flex-col bg-[#b4b4b4]">
              <div className="flex min-h-0 flex-1">
                <div className="relative flex min-w-0 flex-1">
                  <div className="absolute inset-x-0 top-0 h-[23px] bg-[#e3e3e3]" />
                  <div className="absolute inset-y-0 left-0 w-6 bg-[#e3e3e3]" />
                  <div className="relative">
                    <Designer />
                  </div>
                </div>
                <div className="flex w-[6px] shrink-0 items-center bg-gradient-to-r from-[#c8c8c8] to-[#ececec]">
                  <span className="flex h-[50px] w-full items-center bg-[#a5a5a5]">
                    <span className="border-y-[4px] border-l-[4px] border-y-transparent border-l-white" />
                  </span>
                </div>
                <Inspector />
              </div>
              <div className="h-[3px] shrink-0 bg-[#f0f0f0]" />
              <StatusBar />
              <MemoDialog />
            </div>
          </div>
        </main>
      </div>
    </div>
  );
}
